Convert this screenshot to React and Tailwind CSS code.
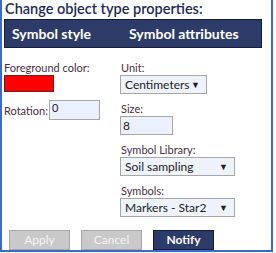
export default function App() {
  const label = "text-[11px] leading-[13px] text-[#4a2c3e]";
  const select =
    "flex items-center justify-between h-[19px] border border-[#a6a6a6] bg-[#eef2fb] pl-[4px] pr-[6px] text-[12px] text-[#222]";

  return (
    <div className="w-[273px] h-[252px] border-x-2 border-b-2 border-[#3a6bc8] bg-white font-['Lato',sans-serif] flex flex-col">
      <div className="pl-[3px] pt-[1px] text-[14.5px] leading-[16px] font-semibold text-[#1d2b57]">
        Change object type properties:
      </div>

      <div className="mt-[2px] ml-[2px] w-[258px] h-[31px] bg-[#2d3b69] border border-[#141c3f] flex items-center text-white font-bold text-[14px]">
        <div className="w-[124px] pl-[7px]">Symbol style</div>
        <div>Symbol attributes</div>
      </div>

      <div className="flex mt-[13px]">
        <div className="w-[118px] pl-[2px] flex flex-col">
          <div className={label}>Foreground color:</div>
          <div className="mt-[1px] w-[50px] h-[17px] bg-[#ff0000] border border-[#7a1a1a]" />
          <div className="mt-[8px] flex items-center">
            <span className={label}>Rotation:</span>
            <div className="ml-[1px] w-[51px] h-[20px] border border-[#a6a6a6] bg-[#eaf0fc] text-[11px] leading-[14px] pl-[2px] text-[#222]">
              0
            </div>
          </div>
        </div>

        <div className="flex flex-col">
          <div className={`${label} pl-[1px]`}>Unit:</div>
          <div className={`${select} w-[87px] mt-[1px] pr-[6px]`}>
            <span>Centimeters</span>
            <span className="text-[9px]">▼</span>
          </div>

          <div className={`${label} pl-[1px] mt-[8px]`}>Size:</div>
          <div className="mt-[1px] w-[53px] h-[19px] border border-[#a6a6a6] bg-[#eaf0fc] text-[12px] leading-[17px] pl-[2px] text-[#222]">
            8
          </div>

          <div className={`${label} pl-[1px] mt-[8px]`}>Symbol Library:</div>
          <div className={`${select} w-[115px] mt-[1px]`}>
            <span>Soil sampling</span>
            <span className="text-[9px]">▼</span>
          </div>

          <div className={`${label} pl-[1px] mt-[8px]`}>Symbols:</div>
          <div className={`${select} w-[115px] mt-[1px]`}>
            <span>Markers - Star2</span>
            <span className="text-[9px]">▼</span>
          </div>
        </div>
      </div>

      <div className="flex gap-[11px] pl-[7px] mt-[13px]">
        <button className="w-[61px] h-[20px] bg-[#c9c9c9] border border-[#a8a8a8] text-[#f4f4f4] text-[12px]">
          Apply
        </button>
        <button className="w-[61px] h-[20px] bg-[#c9c9c9] border border-[#a8a8a8] text-[#f4f4f4] text-[12px]">
          Cancel
        </button>
        <button className="w-[61px] h-[20px] bg-[#2d3b69] border border-[#141c3f] text-white font-bold text-[12px]">
          Notify
        </button>
      </div>
    </div>
  );
}
